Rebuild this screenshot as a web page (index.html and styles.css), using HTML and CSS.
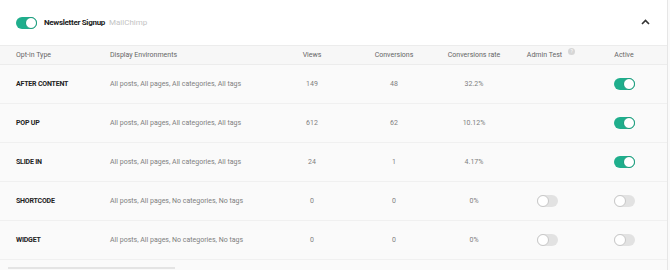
FILE: index.html
```html
<!DOCTYPE html>
<html lang="en">
<head>
    <meta charset="UTF-8">
    <title>Newsletter Signup</title>
    <link rel="stylesheet" href="styles.css">
</head>
<body>
    <div class="card">
        <div class="top">
            <span class="switch on"></span>
            <span class="name">Newsletter Signup</span>
            <span class="provider">MailChimp</span>
            <svg class="chevron" width="9" height="6" viewBox="0 0 9 6"><polyline points="1,5 4.5,1.5 8,5" fill="none" stroke="#333" stroke-width="1.6"/></svg>
        </div>
        <div class="grid head">
            <div>Opt-in Type</div>
            <div>Display Environments</div>
            <div class="c">Views</div>
            <div class="c">Conversions</div>
            <div class="c">Conversions rate</div>
            <div class="c admin"><span>Admin Test</span><span class="help">?</span></div>
            <div class="c">Active</div>
        </div>
        <div class="grid row">
            <div class="type">AFTER CONTENT</div>
            <div>All posts, All pages, All categories, All tags</div>
            <div class="c">149</div>
            <div class="c">48</div>
            <div class="c">32.2%</div>
            <div class="c"></div>
            <div class="c"><span class="switch on"></span></div>
        </div>
        <div class="grid row">
            <div class="type">POP UP</div>
            <div>All posts, All pages, All categories, All tags</div>
            <div class="c">612</div>
            <div class="c">62</div>
            <div class="c">10.12%</div>
            <div class="c"></div>
            <div class="c"><span class="switch on"></span></div>
        </div>
        <div class="grid row">
            <div class="type">SLIDE IN</div>
            <div>All posts, All pages, All categories, All tags</div>
            <div class="c">24</div>
            <div class="c">1</div>
            <div class="c">4.17%</div>
            <div class="c"></div>
            <div class="c"><span class="switch on"></span></div>
        </div>
        <div class="grid row">
            <div class="type">SHORTCODE</div>
            <div>All posts, All pages, No categories, No tags</div>
            <div class="c">0</div>
            <div class="c">0</div>
            <div class="c">0%</div>
            <div class="c"><span class="switch"></span></div>
            <div class="c"><span class="switch"></span></div>
        </div>
        <div class="grid row">
            <div class="type">WIDGET</div>
            <div>All posts, All pages, No categories, No tags</div>
            <div class="c">0</div>
            <div class="c">0</div>
            <div class="c">0%</div>
            <div class="c"><span class="switch"></span></div>
            <div class="c"><span class="switch"></span></div>
        </div>
        <div class="scrollbar"></div>
    </div>
</body>
</html>
```

FILE: styles.css
```css
body{
    margin: 0;
    background-color: #fafafa;
    font-family: Roboto, "Liberation Sans", sans-serif;
}
.card{
    width: 667px;
    height: 270px;
    border-right: 1px solid #e6e6e6;
    background-color: #fafafa;
}
.top{
    height: 45px;
    background-color: #fff;
    display: flex;
    align-items: center;
    padding: 0 16px;
    box-sizing: border-box;
}
.name{
    font-size: 8px;
    font-weight: bold;
    color: #222;
    margin-left: 7px;
    letter-spacing: -0.3px;
}
.provider{
    font-size: 8px;
    color: #c4c4c4;
    margin-left: 4px;
}
.chevron{
    margin-left: auto;
    margin-right: 1px;
    margin-top: -2px;
}
.grid{
    display: grid;
    grid-template-columns: 94px 172px 60px 104px 56px 90px 64px;
    padding-left: 16px;
    align-items: center;
    font-size: 7px;
    color: #808080;
}
.grid .c{
    text-align: center;
}
.head{
    height: 18px;
    background-color: #f7f7f7;
    border-top: 1px solid #ececec;
    border-bottom: 1px solid #ececec;
    color: #666;
}
.head .admin{
    display: flex;
    justify-content: center;
    align-items: center;
    padding-left: 8px;
}
.row{
    height: 38px;
    border-bottom: 1px solid #f0f0f0;
}
.type{
    font-weight: bold;
    color: #222;
    letter-spacing: -0.2px;
}
.help{
    width: 7px;
    height: 7px;
    border-radius: 50%;
    background-color: #d6d6d6;
    color: #fff;
    font-size: 5px;
    line-height: 7px;
    text-align: center;
    margin-left: 6px;
    margin-top: -8px;
}
.switch{
    display: inline-block;
    position: relative;
    width: 21px;
    height: 12px;
    border-radius: 6px;
    background-color: #e2e2e2;
    vertical-align: middle;
}
.switch::after{
    content: "";
    position: absolute;
    left: 0;
    top: 0;
    width: 10px;
    height: 10px;
    border-radius: 50%;
    background-color: #fff;
    border: 1px solid #c8c8c8;
}
.switch.on{
    background-color: #1fae8c;
}
.switch.on::after{
    left: 9px;
    border-color: #1a9a7b;
}
.scrollbar{
    width: 167px;
    height: 2px;
    margin: 7px 0 0 8px;
    background-color: #e4e4e4;
}
```
